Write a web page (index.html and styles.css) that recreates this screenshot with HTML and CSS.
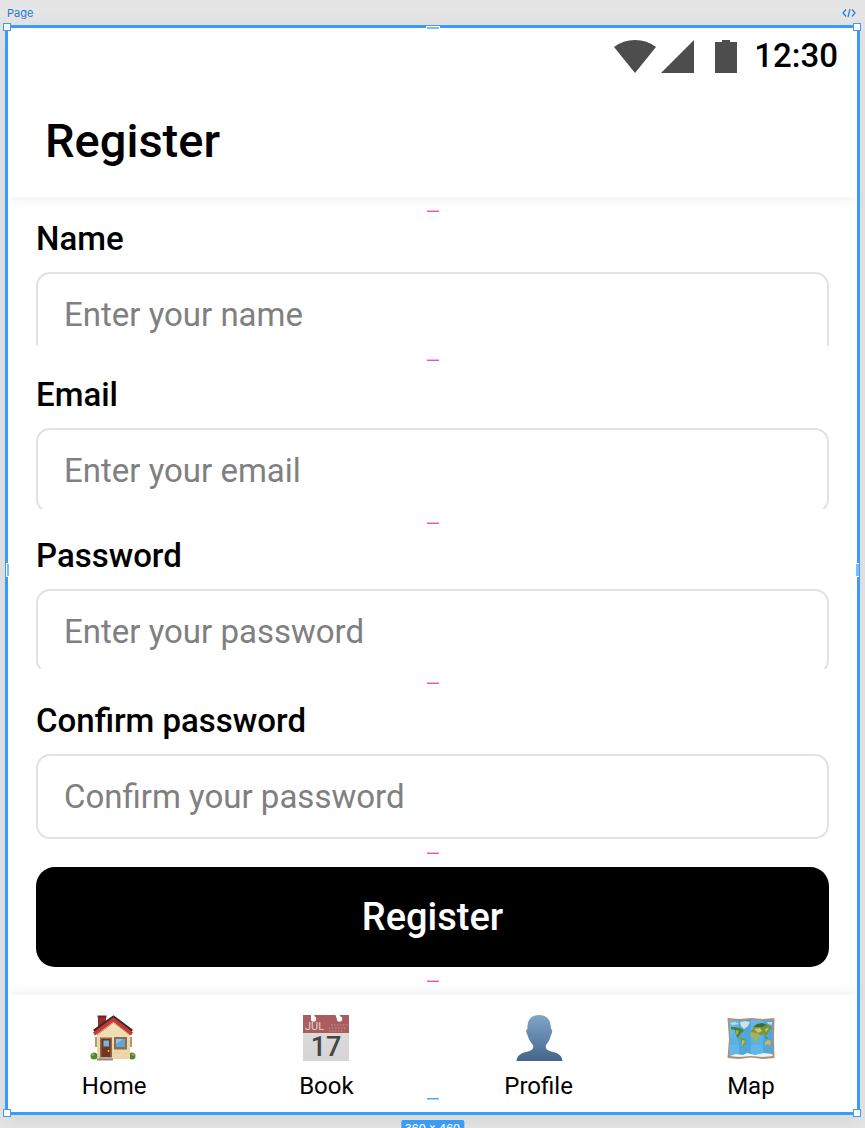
FILE: index.html
```
<!DOCTYPE html>
<html lang="en">
<head>
<meta charset="utf-8">
<title>Register</title>
<link rel="stylesheet" href="styles.css">
</head>
<body>
<div class="canvas-bar">
  <span>Page</span>
  <svg width="14" height="10" viewBox="0 0 14 10" fill="none" stroke="currentColor" stroke-width="1.2"><path d="M4 1.500 1 5l3 3.500M10 1.500 13 5l-3 3.500M8 1 6 9"/></svg>
</div>
<div class="frame">
  <header class="top">
    <div class="status">
      <svg class="wifi" width="42" height="33" viewBox="0 0 42 33"><path d="M0 7Q9 0 21 0T42 7L21 33Z"/></svg>
      <svg class="signal" width="33" height="33" viewBox="0 0 33 33"><path d="M33 0V33H0Z"/></svg>
      <svg class="battery" width="22" height="33" viewBox="0 0 22 33"><path d="M7 0h8v2h7v31H0V2h7Z"/></svg>
      <span>12:30</span>
    </div>
    <h1 class="title">Register</h1>
  </header>
  <form class="form">
    <div class="gap"></div>
    <div class="field field-name">
      <label for="name">Name</label>
      <input id="name" type="text" placeholder="Enter your name">
    </div>
    <div class="gap"></div>
    <div class="field field-email">
      <label for="email">Email</label>
      <input id="email" type="email" placeholder="Enter your email">
    </div>
    <div class="gap"></div>
    <div class="field field-password">
      <label for="password">Password</label>
      <input id="password" type="password" placeholder="Enter your password">
    </div>
    <div class="gap"></div>
    <div class="field">
      <label for="confirm">Confirm password</label>
      <input id="confirm" type="password" placeholder="Confirm your password">
    </div>
    <div class="gap"></div>
    <button class="submit" type="button">Register</button>
    <div class="gap"></div>
  </form>
  <nav class="nav">
    <a href="#home">
      <svg width="48" height="48" viewBox="-1 0 48 48">
        <defs><linearGradient id="wall" x1="0" y1="0" x2="0" y2="1"><stop offset="0" stop-color="#f3e2bd"/><stop offset="1" stop-color="#ecd5a8"/></linearGradient></defs>
        <path d="M7 2h8v11l-8 6Z" fill="#962f2b"/><path d="M6.500 1.500h9v2h-9Z" fill="#6d2421"/>
        <path d="M4 23h3v10H4ZM39 23h2v10h-2Z" fill="#b69771"/>
        <path d="M6 20 23 5 39 20V45H6Z" fill="url(#wall)"/>
        <path d="M7 27h32M7 31h32M7 35h32M7 39h32" stroke="#dfc797" stroke-width=".5"/>
        <path d="M3 17 22.500 3 41 17" fill="none" stroke="#2f2c2c" stroke-width="3"/>
        <path d="M3 20 22.500 5.500 41 20" fill="none" stroke="#cf3532" stroke-width="3.500"/>
        <path d="M6 21 22.500 8.500 39 21" fill="none" stroke="#a58155" stroke-width=".8"/>
        <circle cx="3" cy="42" r="3.500" fill="#548534"/><circle cx="2" cy="40.500" r="1.500" fill="#80a75a"/>
        <circle cx="41" cy="42" r="3.500" fill="#548534"/><circle cx="42" cy="40.500" r="1.500" fill="#80a75a"/>
        <path d="M6.500 36h2.500v8h-2.500ZM37 36h2v9h-2Z" fill="#ecd5a8"/>
        <path d="M9 23.500h12V44H9Z" fill="#8f6649"/><path d="M10.500 25h9v19h-9Z" fill="#713522"/>
        <path d="M12.500 26.500h5.500v6h-5.500Z" fill="#74b7de"/><circle cx="17.500" cy="37" r="1" fill="#efbd5d"/>
        <path d="M23 23h13v12.500H23Z" fill="#8f6c4f"/><path d="M25 25h9v8h-9Z" fill="#5fa6d7"/><path d="m25 25h7l-7 5Z" fill="#8ac4e7"/>
        <path d="M8 43h13v1.500H8Z" fill="#b8aaa0"/><path d="M6 44.500h16v2H6Z" fill="#928a84"/>
      </svg>
      <span>Home</span>
    </a>
    <a href="#book">
      <svg width="48" height="48" viewBox="0 0 48 48">
        <defs><linearGradient id="page" x1="0" y1="0" x2="0" y2="1"><stop offset="0" stop-color="#dedede"/><stop offset="1" stop-color="#d5d5d5"/></linearGradient></defs>
        <path d="M1 1h46v46H1Z" fill="url(#page)"/><path d="M1 1h46v18H1Z" fill="#a95d5f"/>
        <path d="M9 0h3l1 4H9ZM33 0h4l2 4-4 1Z" fill="#fff"/><circle cx="11.500" cy="5" r="2.700" fill="#fff"/><circle cx="37.500" cy="5" r="2.700" fill="#fff"/>
        <text class="cal-month" x="3" y="16">JUL</text>
        <path d="M29 11h17M27 14h18M27 17h14" stroke="#cf9697" stroke-width="1" stroke-dasharray="1.500 1.500"/>
        <text class="cal-day" x="24" y="42">17</text>
      </svg>
      <span>Book</span>
    </a>
    <a href="#profile">
      <svg width="48" height="48" viewBox="0 0 48 48">
        <defs><linearGradient id="bust" x1="0" y1="0" x2="0" y2="1"><stop offset="0" stop-color="#7fa6c9"/><stop offset="1" stop-color="#45658a"/></linearGradient></defs>
        <path d="M24 1C16 1 12 6 12.500 15c-1.800 0-1.500 4 0 6 1 4 3 7 5.500 10 1 4-1 5.500-7 7-6 1.500-9 4-9.500 9H47.500c-.5-5-3.500-7.500-9.500-9-6-1.500-8-3-7-7 2.500-3 4-6 5-10 1.500-2 1.800-6 0-6C36 6 32 1 24 1Z" fill="url(#bust)"/>
      </svg>
      <span>Profile</span>
    </a>
    <a href="#map">
      <svg width="48" height="48" viewBox="0 0 48 48">
        <path d="M.5 4 12 5l12-1 12 1 11.500-1-.5 21 .5 19-11.500 1-12-1.500L12 45 .5 44 2 25Z" fill="#b98c6b"/>
        <path d="m2 6 10 .5 12-1 12 1 10-.5-.5 18 .5 18-10 1-12-1-12 1-10-1 1-18Z" fill="#62b7e8"/>
        <path d="m12 6.500 12-1V42l-12 1ZM36 6.500 46 6l-.5 18 .5 18-10 1Z" fill="#4a9dd2" opacity=".65"/>
        <path d="M3 24h43v7H3Z" fill="#47a4dc" opacity=".3"/>
        <path d="m13 8 5-1 5 1-2 4-4 3-3-3Z" fill="#d5e2e5"/>
        <path d="M4 13h4l5 1 2 1 2 2-3 2-2 3-1 3-2-4-1-5-4-1Z" fill="#4c8136"/><path d="m9 16 3 1-1 3-2 1Z" fill="#b2a943"/>
        <path d="m14 23 5 3-1 3-2 5-1-5-2-4Z" fill="#6f9f3b"/><path d="m15 26 3 1-3 5Z" fill="#d3bd58"/>
        <path d="m24 17 3-4 7-3 8 1 3 3-2 2-2 3-2 3-3-2-2 2-2-2-3 1-3-1Z" fill="#7a943a"/>
        <path d="m26 13 4-3 5-1 5 2-5 2Z" fill="#376f3f"/><path d="m24 18 6 1 2 3-2 4-2 3-2-6-3-2Z" fill="#abb24b"/>
        <path d="m27 15 6-1 2 3-4 2Z M38 15l4-1-3 4Z" fill="#dfbf5d"/>
        <path d="m38 28 3-2 3 1-1 5-2-2-3 1Z" fill="#e4ae4d"/><path d="m37 21 2 2 2 1-2 1Z" fill="#4c8136"/>
        <path d="m3 9 5-1 4 2-7 1ZM40 8h5v3l-4-1Z" fill="#c1dce0"/>
        <path d="m3 42 6-2 7 1 4-2 8 2 9-2 8 1 1 2-10 1-12-1-12 1Z" fill="#eff4f3"/>
      </svg>
      <span>Map</span>
    </a>
    <i class="nav-mark"></i>
  </nav>
  <i class="corner tl"></i><i class="corner tr"></i><i class="corner bl"></i><i class="corner br"></i>
  <i class="edge edge-top"></i><i class="edge edge-left"></i><i class="edge edge-right"></i>
  <div class="size">360 x 460</div>
</div>
</body>
</html>
```

FILE: styles.css
```
* { box-sizing: border-box; }
body {
  margin: 0;
  height: 100vh;
  overflow: hidden;
  background: #e5e5e5;
  color: #000;
  font-family: Roboto, "Liberation Sans", sans-serif;
}
.canvas-bar {
  display: flex;
  justify-content: space-between;
  align-items: center;
  height: 25px;
  padding: 0 9px 0 7px;
  color: #1c7cd9;
  font: 11px/16px Inter, sans-serif;
}
.frame {
  position: relative;
  margin: 0 5px;
  border: 3px solid #3a9cf6;
  background: #fff;
  box-shadow: 0 6px 22px rgba(0, 0, 0, .07);
}
.top {
  position: relative;
  background: #fff;
  box-shadow: 0 0 14px rgba(0, 0, 0, .09);
  clip-path: inset(0 0 -20px 0);
}
.status {
  display: flex;
  justify-content: flex-end;
  align-items: center;
  height: 56px;
  padding-right: 19px;
  font-size: 33px;
  font-weight: 500;
  line-height: 40px;
}
.status svg { fill: #4d4d4d; }
.signal { margin-left: 5px; }
.battery { margin: 0 17px 0 21px; }
.title {
  margin: 0;
  padding: 0 37px;
  font-size: 47px;
  font-weight: 500;
  line-height: 113px;
}
.form {
  display: flex;
  flex-direction: column;
  padding: 0 28px;
}
.gap {
  display: grid;
  place-items: center;
  height: 28px;
}
.gap::after {
  content: "";
  width: 12px;
  height: 2px;
  background: linear-gradient(#f9b5df 50%, #f24fb4 50%);
}
.field {
  display: flex;
  flex-direction: column;
  justify-content: center;
  height: 142px;
  overflow: hidden;
}
.field-name { height: 121px; }
.field-email { height: 135px; }
.field-password { height: 132px; }
.field label {
  flex: none;
  padding: 10px 0 19px;
  font-size: 33px;
  font-weight: 500;
  line-height: 28px;
}
.field input {
  flex: none;
  width: 100%;
  height: 85px;
  padding: 0 26px;
  border: 2px solid #e2e2e2;
  border-radius: 14px;
  background: #fff;
  font: 33px Roboto, sans-serif;
}
.field input::placeholder { color: #808080; opacity: 1; }
.submit {
  height: 100px;
  border: 0;
  border-radius: 19px;
  background: #000;
  color: #fff;
  font: 500 38px Roboto, sans-serif;
}
.nav {
  position: relative;
  display: grid;
  grid-template-columns: repeat(4, 1fr);
  height: 117px;
  padding-top: 19px;
  background: #fff;
  box-shadow: 0 0 14px rgba(0, 0, 0, .09);
  clip-path: inset(-20px 0 0 0);
}
.nav a {
  display: flex;
  flex-direction: column;
  align-items: center;
  gap: 10px;
  color: #000;
  font-size: 24px;
  line-height: 28px;
  text-decoration: none;
}
.cal-month { font: 11px/1 Roboto, sans-serif; fill: #ead3d3; }
.cal-day { font: 500 27px/1 Roboto, sans-serif; fill: #454545; text-anchor: middle; }
.nav-mark {
  position: absolute;
  left: calc(50% - 6px);
  bottom: 12px;
  width: 12px;
  height: 2px;
  background: linear-gradient(#4aa9f5 50%, #a5d5fb 50%);
}
.corner {
  position: absolute;
  width: 8px;
  height: 8px;
  border: 1px solid #3a9cf6;
  background: #fff;
}
.tl, .tr { top: -5px; }
.bl, .br { bottom: -5px; }
.tl, .bl { left: -5px; }
.tr, .br { right: -4px; }
.edge {
  position: absolute;
  border: 1px solid #fff;
  background: #78bdf9;
}
.edge-top { left: calc(50% - 7px); top: -2px; width: 14px; height: 3px; border-bottom: 0; }
.edge-left, .edge-right { top: calc(50% - 7px); width: 3px; height: 14px; }
.edge-left { left: -2px; border-right: 0; }
.edge-right { right: -2px; border-left: 0; border-right: 0; }
.size {
  position: absolute;
  top: calc(100% + 8px);
  left: 50%;
  transform: translateX(-50%);
  padding: 0 4px;
  border-radius: 2px;
  background: #3a9cf6;
  color: #fff;
  font: 500 11px/17px Inter, sans-serif;
  white-space: nowrap;
}
```
